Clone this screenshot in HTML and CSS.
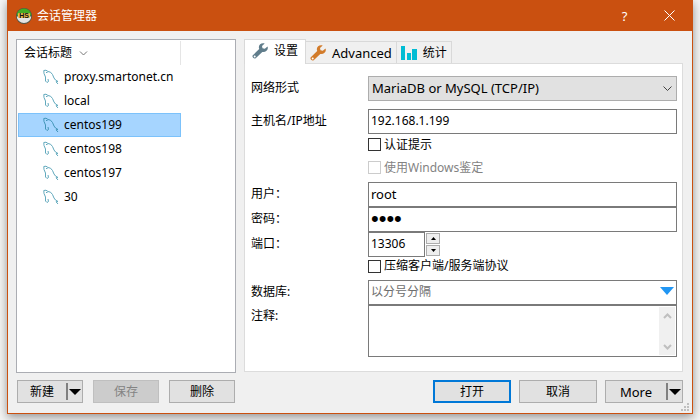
FILE: index.html
```html
<!DOCTYPE html>
<html lang="zh-CN">
<head>
<meta charset="utf-8">
<meta name="viewport" content="width=device-width, initial-scale=1">
<title>会话管理器</title>
<link rel="stylesheet" href="styles.css">
</head>
<body>
<svg class="defs" aria-hidden="true">
  <symbol id="dolphin" viewBox="0 0 16 16">
    <path d="M4 13.500 2.500 12 2.500 8 1 4.500.8 1.500 3 1.200 5 2.500 7.500 3.200 9.500 5.500 11 9 12.500 11 15 12.500 13 12.800 15 15M4 13.500 5.500 12.500 5 10" fill="none" stroke="currentColor" stroke-width="1"/>
    <path d="M3 3.500h1.500" stroke="currentColor" stroke-width="1"/>
  </symbol>
  <symbol id="wrench" viewBox="0 0 16 16">
    <path d="M15.500 3.500 12.800 5.800 10.500 5.200 10 3 12.700.5C10 -.5 7 1 6.800 4.200L7.200 6 .8 12.300C-.5 13.600 2 16.500 3.700 15.200L10.300 9C14 9.600 16.900 6.500 15.500 3.500Z" fill="currentColor"/>
    <circle cx="2.700" cy="13.400" r="1" fill="#fff"/>
  </symbol>
</svg>
<main class="dialog">
  <header class="titlebar">
    <svg class="logo" viewBox="0 0 16 16" aria-hidden="true">
      <circle cx="8" cy="8" r="8" fill="#4d5548"/>
      <path d="M.8 7.500a7.200 7 0 0 1 14.400 0z" fill="#43ad24"/>
      <path d="M.8 8.500h14.400a7.200 6.500 0 0 1-14.400 0z" fill="#e4e4e4"/>
      <rect x="2" y="5" width="12" height="5" rx="1" fill="#edbd4c"/>
      <text x="8" y="10" text-anchor="middle" class="logo-text">HS</text>
    </svg>
    <h1>会话管理器</h1>
    <button class="caption-button help" aria-label="帮助">?</button>
    <button class="caption-button" aria-label="关闭"><svg width="11" height="11" viewBox="0 0 11 11"><path d="M.5.5l10 10M10.500.5l-10 10" stroke="#fff" fill="none"/></svg></button>
  </header>
  <div class="content">
    <section class="sessions">
      <div class="list">
        <div class="list-head">会话标题<svg width="9" height="5" viewBox="0 0 9 5"><path d="M1 .5l3.500 3.500L8 .5" stroke="#777" fill="none"/></svg></div>
        <button class="row"><svg><use href="#dolphin"/></svg>proxy.smartonet.cn</button>
        <button class="row"><svg><use href="#dolphin"/></svg>local</button>
        <button class="row selected" aria-pressed="true"><svg><use href="#dolphin"/></svg>centos199</button>
        <button class="row"><svg><use href="#dolphin"/></svg>centos198</button>
        <button class="row"><svg><use href="#dolphin"/></svg>centos197</button>
        <button class="row"><svg><use href="#dolphin"/></svg>30</button>
      </div>
      <div class="actions">
        <button class="button split"><span>新建</span><i class="arrow"></i></button>
        <button class="button" disabled>保存</button>
        <button class="button">删除</button>
      </div>
    </section>
    <section class="details">
      <div class="tabs" role="tablist">
        <button class="tab active" role="tab" aria-selected="true"><svg class="steel"><use href="#wrench"/></svg>设置</button>
        <button class="tab latin" role="tab"><svg class="orange"><use href="#wrench"/></svg>Advanced</button>
        <button class="tab" role="tab"><svg viewBox="0 0 16 16"><path d="M0 1h4v14H0zM6 8h4v7H6zM11 4h5v11h-5z" fill="#00bcd4"/></svg>统计</button>
      </div>
      <form class="panel">
        <label for="network">网络形式</label>
        <div class="select-box">
          <select id="network" class="field latin"><option>MariaDB or MySQL (TCP/IP)</option></select>
          <svg width="9" height="6" viewBox="0 0 9 6"><path d="M.5.5l4 4 4-4" stroke="#444" fill="none"/></svg>
        </div>
        <label for="host" class="host">主机名/IP地址</label>
        <input id="host" class="field host" type="text" value="192.168.1.199">
        <label class="check"><input type="checkbox">认证提示</label>
        <label class="check windows"><input type="checkbox" disabled>使用Windows鉴定</label>
        <label for="user">用户：</label>
        <input id="user" class="field latin" type="text" value="root">
        <label for="password">密码：</label>
        <input id="password" class="field password" type="password" value="root">
        <label for="port">端口：</label>
        <div class="port">
          <input id="port" class="field" type="text" inputmode="numeric" value="13306">
          <div class="spin">
            <button type="button" aria-label="增加"><svg width="5" height="3"><path d="M0 3 2.500 0 5 3z"/></svg></button>
            <button type="button" aria-label="减少"><svg width="5" height="3"><path d="M0 0 2.500 3 5 0z"/></svg></button>
          </div>
        </div>
        <label class="check compress"><input type="checkbox">压缩客户端/服务端协议</label>
        <label for="database">数据库:</label>
        <div class="database">
          <input id="database" class="field" type="text" placeholder="以分号分隔">
          <button type="button" aria-label="选择数据库"><svg width="14" height="8"><path d="M0 0h14L7 8z" fill="#2196f3"/></svg></button>
        </div>
        <label for="comment">注释:</label>
        <div class="comment">
          <textarea id="comment"></textarea>
          <div class="scroll">
            <svg width="9" height="6" viewBox="0 0 9 6"><path d="M1 5l3.500-3.500L8 5" /></svg>
            <svg width="9" height="6" viewBox="0 0 9 6"><path d="M1 1l3.500 3.500L8 1" /></svg>
          </div>
        </div>
      </form>
      <div class="actions right">
        <button class="button primary">打开</button>
        <button class="button">取消</button>
        <button class="button split latin"><span>More</span><i class="arrow"></i></button>
      </div>
    </section>
  </div>
  <svg class="grip" width="8" height="8" aria-hidden="true"><path d="M6 0h2v2H6zM3 3h2v2H3zM6 3h2v2H6zM0 6h2v2H0zM3 6h2v2H3zM6 6h2v2H6z" fill="#bfbfbf"/></svg>
</main>
</body>
</html>
```
FILE: styles.css
```css
* { box-sizing: border-box; }
body {
  margin: 0;
  min-height: 100vh;
  padding: 0 7px 7px;
  display: flex;
  background: #f4f4f4;
  color: #000;
  font: 12px/18px "Noto Sans", "Noto Sans CJK SC", sans-serif;
}
button, input, select, textarea { font: inherit; color: inherit; margin: 0; }
button { padding: 0; border: 0; background: none; }
svg { flex-shrink: 0; }
.defs { position: absolute; width: 0; height: 0; }
.dialog {
  flex: 1;
  position: relative;
  display: flex;
  flex-direction: column;
  border: 1px solid #ca5010;
  border-top: 0;
  background: #f0f0f0;
  box-shadow: 0 3px 9px rgba(0, 0, 0, .4);
}
.titlebar {
  display: flex;
  align-items: center;
  height: 31px;
  padding-left: 8px;
  background: #ca5010;
  color: #fff;
}
.logo { width: 16px; height: 16px; margin-right: 5px; }
.logo-text { font: bold 7px "Liberation Sans", sans-serif; fill: #111; }
h1 { margin: 0; flex: 1; font-size: 12px; font-weight: 400; }
.caption-button { width: 45px; height: 30px; display: grid; place-items: center; }
.help { font-size: 13px; }
.content { flex: 1; display: flex; gap: 8px; padding: 8px 9px 9px 8px; }
.sessions { flex: 0 0 220px; display: flex; flex-direction: column; }
.list { flex: 1; border: 1px solid #abadb3; padding: 1px; background: #fff; }
.list-head {
  display: flex;
  align-items: center;
  gap: 7px;
  width: 163px;
  height: 24px;
  padding-left: 6px;
  border-right: 1px solid #e5e5e5;
}
.row {
  display: flex;
  align-items: center;
  gap: 5px;
  width: 163px;
  height: 24px;
  padding: 0 0 1px 24px;
  border: 1px solid transparent;
}
.row svg { width: 16px; height: 16px; color: #62a9bd; }
.row.selected { background: #a6d5ff; border-color: #7cc2fb; }
.row.selected svg { color: #4295b8; }
.actions { display: flex; gap: 10px; padding: 7px 1px 1px; }
.actions.right { justify-content: flex-end; gap: 8px; padding: 8px 0 1px; }
.button {
  width: 66px;
  height: 23px;
  border: 1px solid #adadad;
  background: #e1e1e1;
}
.right .button { width: 78px; }
.button:disabled { background: #ccc; border-color: #bfbfbf; color: #838383; }
.button.primary { border: 2px solid #0078d7; }
.split { display: flex; align-items: center; }
.split span { flex: 1; }
.arrow {
  display: flex;
  align-items: center;
  width: 16px;
  height: 17px;
  border-left: 2px solid #808080;
}
.arrow::after {
  content: "";
  margin-left: 1px;
  border: solid transparent;
  border-width: 6px 6px 0;
  border-top-color: #000;
}
.latin { font-size: 13px; }
.details { flex: 1; display: flex; flex-direction: column; }
.tabs { display: flex; align-items: flex-end; height: 24px; }
.tab {
  display: flex;
  align-items: center;
  gap: 6px;
  height: 22px;
  padding: 0 4px;
  border: 1px solid #d9d9d9;
  border-left: 0;
  border-bottom: 0;
}
.tab.active {
  position: relative;
  height: 25px;
  margin-bottom: -1px;
  padding: 0 7px 2px;
  border-left: 1px solid #d9d9d9;
  background: #fff;
}
.tab svg { width: 16px; height: 16px; }
.tab .steel { color: #607d8b; }
.tab .orange { color: #d27b2a; }
.panel {
  flex: 1;
  display: grid;
  grid-template-columns: 117px 1fr;
  align-content: start;
  padding: 12px 5px 14px 6px;
  border: 1px solid #dcdcdc;
  background: #fff;
}
.panel > label { align-self: center; padding-bottom: 2px; }
.panel > label[for="comment"] { align-self: start; padding-top: 2px; }
.field {
  display: block;
  width: 100%;
  height: 25px;
  padding: 0 2px 2px;
  border: 1px solid #7a7a7a;
  border-radius: 0;
  background: #fff;
}
.password { font-family: "Liberation Sans", sans-serif; font-size: 22px; }
.select-box, .database, .comment { position: relative; }
.select-box .field { appearance: none; padding-left: 3px; border-color: #adadad; background: #e1e1e1; }
.select-box svg { position: absolute; right: 5px; top: 10px; pointer-events: none; }
.panel > .host { margin-top: 8px; }
.panel > .check { grid-column: 2; display: flex; align-items: center; gap: 3px; height: 23px; }
.check input {
  appearance: none;
  width: 13px;
  height: 13px;
  border: 1px solid #333;
  background: #fff;
}
.panel > .windows { color: #838383; margin-bottom: 2px; }
.check input:disabled { border-color: #ccc; }
.port { display: flex; gap: 1px; }
.port .field { width: 57px; }
.spin { display: grid; gap: 1px; padding: 1px 0; }
.spin button {
  width: 14px;
  height: 11px;
  display: grid;
  place-items: center;
  border: 1px solid #adadad;
  background: #eee;
}
.panel > .compress { height: 18px; padding: 0; margin-bottom: 5px; }
.database .field { padding-right: 20px; }
.database .field::placeholder { color: #6d6d6d; }
.database button { position: absolute; right: 3px; top: 7px; height: 8px; display: flex; }
.comment { display: flex; height: 52px; padding: 1px; border: 1px solid #7a7a7a; }
.comment textarea { flex: 1; border: 0; resize: none; overflow: hidden; }
.scroll {
  width: 16px;
  display: flex;
  flex-direction: column;
  align-items: center;
  justify-content: space-between;
  padding: 6px 0 5px;
  background: #f0f0f0;
}
.scroll path { fill: none; stroke: #bfbfbf; stroke-width: 2; }
.grip { position: absolute; right: 3px; bottom: 2px; }
```
